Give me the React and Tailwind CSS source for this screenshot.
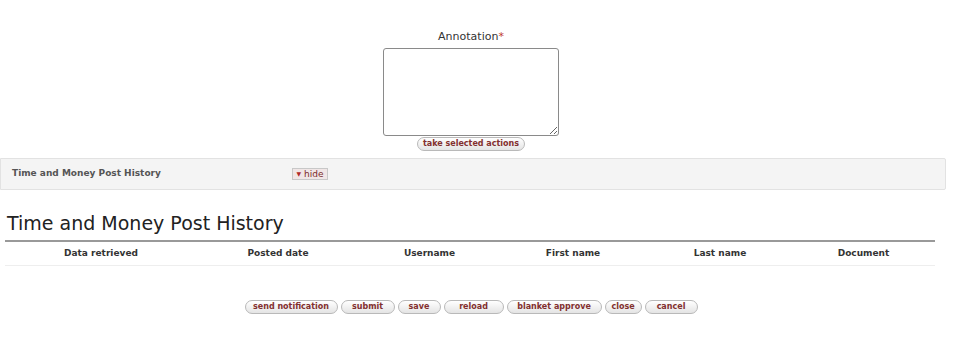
import React from "react";

const columns = [
  { label: "Data retrieved", w: "w-[192px]" },
  { label: "Posted date", w: "w-[162px]" },
  { label: "Username", w: "w-[141px]" },
  { label: "First name", w: "w-[146px]" },
  { label: "Last name", w: "w-[148px]" },
  { label: "Document", w: "w-[139px]" },
];

const actions = [
  { label: "send notification", w: "w-[93px]" },
  { label: "submit", w: "w-[54px]" },
  { label: "save", w: "w-[43px]" },
  { label: "reload", w: "w-[60px]" },
  { label: "blanket approve", w: "w-[95px]" },
  { label: "close", w: "w-[37px]" },
  { label: "cancel", w: "w-[53px]" },
];

const PillButton = ({ label, className = "" }) => (
  <button
    type="button"
    className={`h-[14px] whitespace-nowrap rounded-[7px] border border-[#b9b9b9] bg-gradient-to-b from-white to-[#e4e4e4] text-[8px] font-bold leading-none text-[#83302f] ${className}`}
  >
    {label}
  </button>
);

export default function App() {
  return (
    <div className="w-[971px] h-[338px] bg-white font-['DejaVu_Sans',Verdana,sans-serif] text-[#333]">
      {/* annotation */}
      <div className="w-[942px] flex flex-col items-center pt-[30px]">
        <label className="text-[11px] leading-[14px] text-[#333]">
          Annotation<span className="text-[#c0392b]">*</span>
        </label>
        <textarea className="mt-[4px] w-[176px] h-[88px] rounded-[3px] border border-[#8a8a8a] bg-white resize" />
        <PillButton label="take selected actions" className="mt-[1px] w-[108px] h-[13px]" />
      </div>

      {/* tab bar */}
      <div className="mt-[7px] w-[946px] h-[32px] flex items-center border border-[#e2e2e2] bg-[#f4f4f4] rounded-r-[2px]">
        <span className="pl-[11px] w-[291px] text-[9px] font-bold text-[#555]">
          Time and Money Post History
        </span>
        <button
          type="button"
          className="h-[12px] w-[36px] flex items-center justify-center gap-[3px] border border-[#c8c8c8] bg-[#f0e6e6] text-[9px] leading-none text-[#7b2a2a]"
        >
          <span className="text-[6px] text-[#b02a2a]">▼</span>hide
        </button>
      </div>

      {/* history section */}
      <div className="px-[5px] w-[940px]">
        <h2 className="pl-[2px] mt-[20px] text-[19px] leading-[26px] text-[#222]">
          Time and Money Post History
        </h2>
        <div className="mt-[4px] border-t-2 border-[#999]" />
        <div className="flex h-[24px] items-center border-b border-[#eee]">
          {columns.map((c) => (
            <div key={c.label} className={`${c.w} text-center text-[9px] font-bold text-[#333]`}>
              {c.label}
            </div>
          ))}
        </div>
      </div>

      {/* actions */}
      <div className="w-[942px] mt-[34px] flex justify-center gap-[3px]">
        {actions.map((a) => (
          <PillButton key={a.label} label={a.label} className={a.w} />
        ))}
      </div>
    </div>
  );
}
